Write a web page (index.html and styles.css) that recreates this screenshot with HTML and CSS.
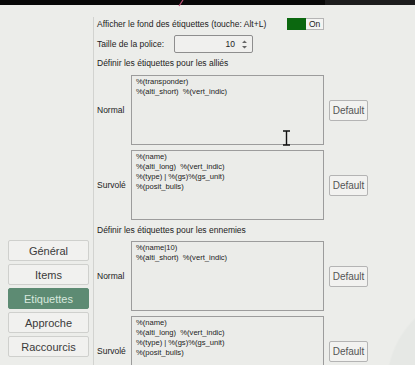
FILE: index.html
```html
<!DOCTYPE html>
<html lang="fr">
<head>
<meta charset="utf-8">
<link rel="stylesheet" href="styles.css">
</head>
<body>
<div class="topbar"></div>
<svg class="pinkmark" width="8" height="8" viewBox="0 0 8 8"><path d="M1 7 L5 1" stroke="#c2557a" stroke-width="1.2" fill="none"/></svg>
<div class="main">
  <nav class="sidebar">
    <div class="navbtn">Général</div>
    <div class="navbtn">Items</div>
    <div class="navbtn active">Etiquettes</div>
    <div class="navbtn">Approche</div>
    <div class="navbtn">Raccourcis</div>
  </nav>
  <section class="content">
    <div class="row1">
      <span class="lbl row1-lbl">Afficher le fond des étiquettes (touche: Alt+L)</span>
      <span class="toggle"><span class="tg-green"></span><span class="tg-on">On</span></span>
    </div>
    <div class="row2">
      <span class="lbl size-lbl">Taille de la police:</span>
      <span class="spin"><span class="spin-val">10</span><span class="spin-arrows"><svg width="7" height="11" viewBox="0 0 7 11"><path d="M1 4 L3.5 1.5 L6 4Z M1 7 L3.5 9.5 L6 7Z" fill="#666"/></svg></span></span>
    </div>
    <div class="section-title first">Définir les étiquettes pour les alliés</div>
    <div class="grid">
      <span class="lbl rowlbl">Normal</span>
      <div class="ta">%(transponder)<br>%(alti_short)&nbsp; %(vert_indic)</div>
      <div class="defbtn">Default</div>
      <span class="lbl rowlbl">Survolé</span>
      <div class="ta">%(name)<br>%(alti_long)&nbsp; %(vert_indic)<br>%(type) | %(gs)%(gs_unit)<br>%(posit_bulls)</div>
      <div class="defbtn">Default</div>
    </div>
    <div class="section-title">Définir les étiquettes pour les ennemies</div>
    <div class="grid">
      <span class="lbl rowlbl">Normal</span>
      <div class="ta">%(name|10)<br>%(alti_short)&nbsp; %(vert_indic)</div>
      <div class="defbtn">Default</div>
      <span class="lbl rowlbl">Survolé</span>
      <div class="ta ta-last">%(name)<br>%(alti_long)&nbsp; %(vert_indic)<br>%(type) | %(gs)%(gs_unit)<br>%(posit_bulls)</div>
      <div class="defbtn">Default</div>
    </div>
  </section>
</div>
<svg class="ibeam" width="9" height="16" viewBox="0 0 9 16"><path d="M1 1 H8 M4.5 1 V15 M1 15 H8" stroke="#111" stroke-width="1.4" fill="none"/></svg>
</body>
</html>
```

FILE: styles.css
```css
html, body {
  margin: 0;
  padding: 0;
}
body {
  width: 415px;
  height: 365px;
  overflow: hidden;
  background: radial-gradient(circle at 480px 385px, #e6e8e5 0, #e6e8e5 92px, #ecedea 94px);
  font-family: "Liberation Sans", Arial, sans-serif;
  color: #222;
  position: relative;
}
.topbar {
  height: 5px;
  background: linear-gradient(to right, #080808 0, #080808 325px, #1d1d1d 325px);
}
.pinkmark {
  position: absolute;
  left: 178px;
  top: -1px;
}
.main {
  display: flex;
  margin-top: 12px;
  height: 348px;
  overflow: hidden;
}
.sidebar {
  width: 93px;
  box-sizing: border-box;
  padding: 223px 0 0 8px;
  display: flex;
  flex-direction: column;
  gap: 3px;
}
.navbtn {
  width: 81px;
  height: 21px;
  box-sizing: border-box;
  border: 1px solid #cfd0cd;
  border-radius: 2px;
  background: #f1f1ef;
  color: #3a3a3a;
  font-size: 11px;
  display: flex;
  align-items: center;
  justify-content: center;
}
.navbtn.active {
  background: #5d8b73;
  border-color: #5d8b73;
  color: #d9e8de;
}
.content {
  border-left: 1px solid #d2d3d0;
  padding-left: 3px;
  flex: 1;
}
.lbl {
  font-size: 8.5px;
  color: #222;
}
.row1 {
  height: 13px;
  display: flex;
  align-items: center;
}
.row1-lbl {
  width: 190px;
}
.toggle {
  display: flex;
  height: 12px;
}
.tg-green {
  width: 19px;
  background: #0b680f;
}
.tg-on {
  width: 18px;
  box-sizing: border-box;
  border: 1px solid #b5b5b5;
  border-left: none;
  background: #f4f4f2;
  font-size: 8.5px;
  display: flex;
  align-items: center;
  padding-left: 3px;
}
.row2 {
  margin-top: 5px;
  height: 18px;
  display: flex;
  align-items: center;
}
.size-lbl {
  width: 77px;
}
.spin {
  width: 79px;
  height: 18px;
  box-sizing: border-box;
  border: 1px solid #8e8e8e;
  border-radius: 2px;
  background: #f0f0ee;
  display: flex;
  align-items: center;
  justify-content: flex-end;
}
.spin-val {
  font-size: 8.5px;
  margin-right: 6px;
}
.spin-arrows {
  display: flex;
  margin-right: 4px;
}
.section-title {
  font-size: 8.5px;
  line-height: 12px;
  margin: 4px 0 5px;
}
.section-title.first {
  margin: 4px 0 6px;
}
.grid {
  display: grid;
  grid-template-columns: 34px 193px 39px;
  row-gap: 5px;
  align-items: center;
}
.grid .defbtn {
  margin-left: 5px;
}
.rowlbl {
  font-size: 8.5px;
}
.ta {
  height: 70px;
  box-sizing: border-box;
  border: 1px solid #9c9c9c;
  background: #ebece9;
  font-size: 7.6px;
  line-height: 10px;
  padding: 1px 4px;
  color: #222;
}
.defbtn {
  width: 39px;
  height: 21px;
  box-sizing: border-box;
  border: 1px solid #b4b4b4;
  border-radius: 2px;
  background: #f2f2f0;
  color: #555;
  font-size: 10px;
  display: flex;
  align-items: center;
  justify-content: center;
}
.ibeam {
  position: absolute;
  left: 282px;
  top: 130px;
}
```
